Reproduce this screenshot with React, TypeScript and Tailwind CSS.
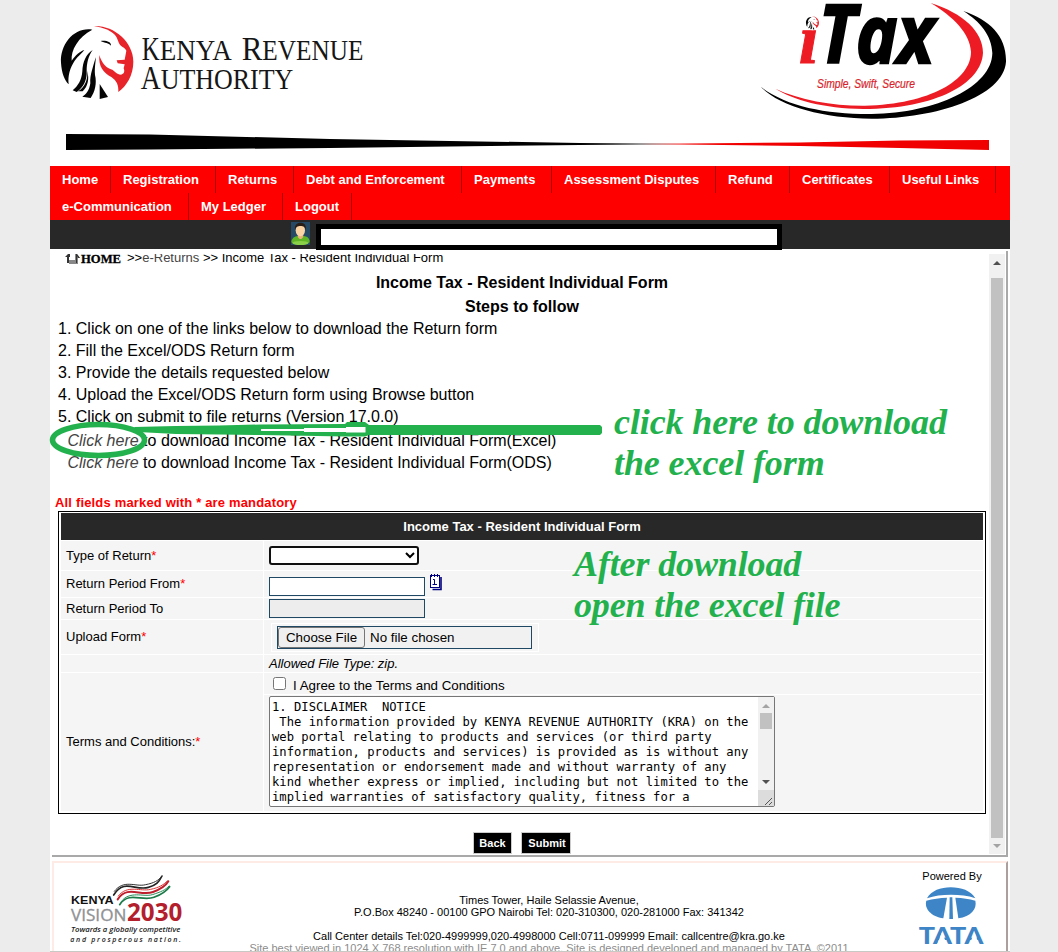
import React from "react";

const SANS = "Liberation Sans, Arial, sans-serif";

function Lion() {
  return (
    <g>
      <g fill="#050505">
        <path d="M127 89C75 80 30 130 33 188C35 220 44 240 56 253C53 226 60 204 74 182C84 168 95 161 103 150C90 154 76 166 65 182C62 150 84 112 127 89Z" />
        <path d="M128 150C108 162 98 186 97 214C95 240 84 258 68 271L80 276C100 262 112 240 110 212C110 190 115 168 128 150Z" />
        <path d="M112 212C114 240 104 262 84 274L98 274C114 258 118 238 112 212Z" />
        <path d="M137 172C130 200 119 225 121 250C118 272 107 284 97 290L122 294C135 275 141 250 135 225C133 200 138 185 137 172Z" />
        <path d="M149 252L174 291L149 297Z" />
        <path d="M152 123C168 121 184 125 183 137C176 128 165 130 152 123Z" />
      </g>
      <path
        fill="#e8242b"
        d="M132 78C190 75 250 125 250 185C250 225 230 258 205 276C206 255 200 243 185 232C160 218 145 200 148 165C155 190 170 205 187 209C195 215 200 222 213 224C222 222 225 215 221 205L224 193L203 190L200 181L224 179L229 152C222 140 213 142 207 130C201 112 197 105 185 97C170 85 150 82 132 78Z"
      />
    </g>
  );
}

function KraLogo() {
  return (
    <svg width="330" height="130" viewBox="0 0 990 390">
      <Lion />
      <g fill="#161616" fontFamily="Liberation Serif, Times New Roman, serif">
        <text x="275" y="181" fontSize="102" textLength="54" lengthAdjust="spacingAndGlyphs">K</text>
        <text x="329" y="181" fontSize="88" textLength="216" lengthAdjust="spacingAndGlyphs">ENYA</text>
        <text x="575" y="181" fontSize="102" textLength="62" lengthAdjust="spacingAndGlyphs">R</text>
        <text x="637" y="181" fontSize="88" textLength="303" lengthAdjust="spacingAndGlyphs">EVENUE</text>
        <text x="272" y="267" fontSize="102" textLength="60" lengthAdjust="spacingAndGlyphs">A</text>
        <text x="332" y="267" fontSize="88" textLength="398" lengthAdjust="spacingAndGlyphs">UTHORITY</text>
      </g>
    </svg>
  );
}

function ITaxLogo() {
  return (
    <svg width="260" height="130" viewBox="0 0 780 390">
      <path fill="#ed1c24" d="M542 9C640 40 699 95 699 158C695 250 560 326 340 327C220 325 130 300 76 266C150 300 250 318 345 317C540 312 663 240 663 155C660 100 610 50 542 9Z" />
      <path fill="#000" d="M640 33C720 60 770 110 768 185C760 290 560 355 365 356C220 355 90 320 33 261C110 320 230 343 365 342C560 340 725 260 727 160C725 105 690 65 640 33Z" />
      <text x="146" y="189" fontSize="212" fill="#ed1c24" stroke="#ed1c24" strokeWidth="3" fontFamily="Liberation Serif, serif" fontWeight="bold" fontStyle="italic">i</text>
      <circle cx="188" cy="64" r="27" fill="#fff" />
      <g transform="translate(162 35) scale(.18)">
        <Lion />
      </g>
      <text x="207" y="190" fontSize="242" fill="#000" stroke="#000" strokeWidth="7" fontFamily="Open Sans, Noto Sans, sans-serif" fontWeight="bold" fontStyle="italic" textLength="346" lengthAdjust="spacingAndGlyphs">Tax</text>
      <text x="201" y="264" fontSize="37" fill="#d8232a" stroke="#d8232a" strokeWidth=".6" fontFamily={SANS} fontStyle="italic" textLength="294" lengthAdjust="spacingAndGlyphs">Simple, Swift, Secure</text>
    </svg>
  );
}

function NavItem({ label, w }: { label: string; w: string }) {
  return <div className={`${w} h-[27px] shrink-0 border-r border-[#a80000] pl-3 text-[13px] leading-[27px] font-bold text-white whitespace-nowrap`}>{label}</div>;
}

const row1 = [
  ["Home", "w-[61px]"],
  ["Registration", "w-[105px]"],
  ["Returns", "w-[78px]"],
  ["Debt and Enforcement", "w-[168px]"],
  ["Payments", "w-[90px]"],
  ["Assessment Disputes", "w-[164px]"],
  ["Refund", "w-[74px]"],
  ["Certificates", "w-[100px]"],
  ["Useful Links", "w-[106px]"],
];
const row2 = [
  ["e-Communication", "w-[139px]"],
  ["My Ledger", "w-[94px]"],
  ["Logout", "w-[69px]"],
];

function Avatar() {
  return (
    <svg width="19" height="23" viewBox="0 0 57 69" className="ml-[241px] mt-[2px] shrink-0">
      <rect width="57" height="69" fill="#264a66" />
      <path d="M1 60C2 48 12 43 20 42L38 42C48 43 56 48 56 60C50 71 8 71 1 60Z" fill="#5fb526" />
      <ellipse cx="28" cy="63" rx="24" ry="6" fill="#8ad048" />
      <path d="M20 38L37 38L36 46C32 53 25 53 21 46Z" fill="#edb27c" />
      <ellipse cx="28" cy="25" rx="14" ry="18" fill="#fbd3a5" />
      <path d="M12 24C10 8 18 2 28 2C40 2 47 9 44 25C42 14 38 12 28 12C20 12 15 14 12 24Z" fill="#2a1d16" />
    </svg>
  );
}

function Tri({ up, color }: { up?: boolean; color: string }) {
  return (
    <svg width="8" height="4" viewBox="0 0 8 4">
      <path d={up ? "M0 4L4 0L8 4Z" : "M0 0L8 0L4 4Z"} fill={color} />
    </svg>
  );
}

function Star() {
  return <span className="text-[#ff0000]">*</span>;
}

function Row({ h, label, children }: { h: string; label?: React.ReactNode; children?: React.ReactNode }) {
  return (
    <div className={`flex gap-px ${h}`}>
      <div className="w-[202px] shrink-0 bg-[#f5f5f5] pl-[5px] flex items-center">{label}</div>
      <div className="flex-1 bg-[#f5f5f5] pl-[5px] flex items-center">{children}</div>
    </div>
  );
}

const terms = `1. DISCLAIMER  NOTICE
 The information provided by KENYA REVENUE AUTHORITY (KRA) on the
web portal relating to products and services (or third party
information, products and services) is provided as is without any
representation or endorsement made and without warranty of any
kind whether express or implied, including but not limited to the
implied warranties of satisfactory quality, fitness for a`;

function Terms() {
  return (
    <div className="flex h-[111px] w-[506px] rounded-[2px] border border-[#767676] bg-white">
      <pre className="flex-1 overflow-hidden pl-[2px] pt-[3px] text-[12.18px] leading-[15px] text-black [font-family:'DejaVu_Sans_Mono',monospace]">{terms}</pre>
      <div className="flex w-4 flex-col items-center bg-[#f1f1f1]">
        <div className="flex h-4 items-center pt-[2px]"><Tri up color="#a3a3a3" /></div>
        <div className="h-4 w-3 bg-[#c1c1c1]" />
        <div className="mt-auto flex h-[17px] items-center"><Tri color="#505050" /></div>
        <div className="flex h-4 w-4 items-end justify-end bg-[#dcdcdc] p-px">
          <svg width="8" height="8" viewBox="0 0 8 8" stroke="#555" strokeWidth="1">
            <path d="M0 8L7 1M4 8L7 5" />
          </svg>
        </div>
      </div>
    </div>
  );
}

function FormTable() {
  return (
    <div className="ml-[3px] mt-px flex h-[303px] w-[928px] flex-col gap-px border border-black px-[2px] pt-px text-[13px] leading-[15px]">
      <div className="h-[27px] shrink-0 bg-[#282828] text-center leading-[27px] font-bold text-white">Income Tax - Resident Individual Form</div>
      <Row h="h-[29px]" label={<span>Type of Return<Star /></span>}>
        <div className="flex h-[19px] w-[150px] items-center justify-end rounded-[3px] border-2 border-[#101010] bg-white pr-[2px]">
          <svg width="10" height="7" viewBox="0 0 10 7" fill="none" stroke="#000" strokeWidth="2"><path d="M1 1L5 5L9 1" /></svg>
        </div>
      </Row>
      <Row h="h-[26px]" label={<span className="-mt-[2px]">Return Period From<Star /></span>}>
        <div className="mt-[5px] h-[19px] w-[156px] border border-[#1f4864] bg-white" />
        <svg width="13" height="18" viewBox="0 0 13 18" className="-mt-[4px] ml-1">
          <path d="M3.500 16.500H12V4" fill="none" stroke="#000080" strokeWidth="1.600" />
          <rect x="1.500" y="2.500" width="9" height="12" fill="#fff" stroke="#000080" />
          <path d="M2.500 1V4M5.500 1V4M8.500 1V4" stroke="#000080" />
          <path d="M4 6.500H5.500V11.500M3.500 11.500H8" fill="none" stroke="#000080" />
        </svg>
      </Row>
      <Row h="h-[21px]" label={<span>Return Period To</span>}>
        <div className="h-[19px] w-[156px] border border-[#1f4864] bg-[#ededed]" />
      </Row>
      <Row h="h-[34px]" label={<span className="-mt-[2px]">Upload Form<Star /></span>}>
        <div className="ml-[2px] border border-white py-[2px] pr-[6px] pl-[5px]">
          <div className="flex h-[23px] w-[255px] items-center border border-[#1f4864] bg-[#f1f1f1]">
            <div className="h-[21px] w-[87px] rounded-[3px] border border-[#767676] bg-[#efefef] text-center text-[13.33px] leading-[19px] whitespace-nowrap">Choose File</div>
            <span className="ml-[5px] text-[13.33px]">No file chosen</span>
          </div>
        </div>
      </Row>
      <Row h="h-[17px]"><span className="italic">Allowed File Type: zip.</span></Row>
      <div className="flex h-[138px] gap-px">
        <div className="flex w-[202px] shrink-0 items-center bg-[#f5f5f5] pb-[2px] pl-[5px]"><span>Terms and Conditions:<Star /></span></div>
        <div className="flex flex-1 flex-col gap-px">
          <div className="flex h-[21px] items-center bg-[#f5f5f5] pl-[9px]">
            <span className="h-[13px] w-[13px] rounded-[2.5px] border border-[#767676] bg-white" />
            <span className="mt-[3px] ml-[7px] text-[13.33px]">I Agree to the Terms and Conditions</span>
          </div>
          <div className="flex-1 bg-[#f5f5f5] pl-[5px] pt-px"><Terms /></div>
        </div>
      </div>
    </div>
  );
}

function HomeMark() {
  return (
    <svg width="57" height="15" viewBox="0 0 57 15" className="shrink-0">
      <path d="M0 7L3 4H5V7H4V13H2V7Z" fill="#333" />
      <path d="M4 10H10V4H12L15 8H13V14H4Z" fill="#888" />
      <path d="M10 4H12L15 8H13L12 6V13H11V4Z" fill="#333" />
      <text x="16" y="13" fontFamily="Liberation Serif, serif" fontWeight="bold" fontSize="12" textLength="40" lengthAdjust="spacingAndGlyphs" stroke="#000" strokeWidth=".3">HOME</text>
    </svg>
  );
}

function Vision2030() {
  return (
    <svg width="120" height="74" viewBox="0 0 360 222" className="mt-[11px] ml-[15px]">
      <g fill="none" strokeLinecap="round">
        <path d="M134 63C165 12 200 52 238 40C262 34 270 24 279 6" stroke="#222" strokeWidth="5" />
        <path d="M136 52C165 14 200 40 230 32C255 27 268 20 277 8" stroke="#333" strokeWidth="3" />
        <path d="M146 76C175 32 215 68 252 54C280 44 290 36 298 22" stroke="#bd1f2d" strokeWidth="6" />
        <path d="M148 66C175 30 215 54 245 46C270 41 285 32 296 20" stroke="#d33" strokeWidth="3" />
        <path d="M152 92C180 50 220 84 255 70C280 60 292 52 302 38" stroke="#1b7a48" strokeWidth="5" />
        <path d="M156 84C180 48 225 70 250 62C275 54 290 48 300 36" stroke="#2b8a58" strokeWidth="3" />
      </g>
      <text x="6" y="90" fontSize="32" fontWeight="bold" fill="#111" fontFamily={SANS} textLength="128" lengthAdjust="spacingAndGlyphs">KENYA</text>
      <text x="6" y="140" fontSize="50" fill="#909295" stroke="#909295" fontFamily="Open Sans, sans-serif" textLength="166" lengthAdjust="spacingAndGlyphs">VISION</text>
      <text x="174" y="140" fontSize="73" fontWeight="bold" fill="#b3202c" fontFamily="Open Sans, sans-serif" textLength="166" lengthAdjust="spacingAndGlyphs">2030</text>
      <text x="6" y="175" fontSize="21" fontStyle="italic" fontWeight="600" fill="#1a1a1a" fontFamily="Open Sans, sans-serif" textLength="328" lengthAdjust="spacingAndGlyphs">Towards a globally competitive</text>
      <text x="4" y="205" fontSize="21" fontStyle="italic" fontWeight="600" fill="#1a1a1a" fontFamily="Open Sans, sans-serif" textLength="332">and prosperous nation.</text>
    </svg>
  );
}

function TataLogo() {
  return (
    <svg width="66" height="60" viewBox="0 0 198 180">
      <g fill="#3d85c6">
        <path d="M27 37C40 14 68 4 98 4C130 4 158 14 172 37C150 28 125 26 99 26C72 26 48 29 27 37Z" />
        <path d="M25 44C45 38 65 36 87 35L76 97C40 92 18 68 25 44Z" />
        <path d="M172 44C153 38 134 36 112 35L121 97C158 92 178 68 172 44Z" />
        <path d="M95 34H103L105 99H94Z" />
      </g>
      <text x="2" y="173" fontSize="67" fontWeight="900" fill="#3d85c6" fontFamily="Lato, sans-serif" textLength="194" lengthAdjust="spacingAndGlyphs">TATA</text>
      <path d="M72 139L86 174H58ZM169 139L183 174H155Z" fill="#fff" />
    </svg>
  );
}

export default function App() {
  return (
    <div className="relative flex h-[952px] w-[1058px] overflow-hidden bg-[#ececec] pl-[50px] text-black [font-family:'Liberation_Sans',Arial,sans-serif]">
      <div className="flex w-[960px] flex-col bg-white">
        <header className="h-[166px] shrink-0">
          <div className="flex justify-between">
            <KraLogo />
            <ITaxLogo />
          </div>
          <svg width="960" height="36" viewBox="0 0 960 36" className="block">
            <path d="M16 4L100 4.500L280 9L530 13L630 14L530 15L280 18L100 19.500L16 20Z" fill="#000" />
            <path d="M590 14L750 12.500L850 10.500L939 10V20L850 18L750 16Z" fill="#f00000" />
          </svg>
        </header>
        <nav className="h-[54px] shrink-0 bg-[#ff0000]">
          <div className="flex">{row1.map(([l, w]) => <NavItem key={l} label={l} w={w} />)}</div>
          <div className="flex">{row2.map(([l, w]) => <NavItem key={l} label={l} w={w} />)}</div>
        </nav>
        <div className="relative z-10 flex h-[29px] shrink-0 items-start bg-[#282828]">
          <Avatar />
          <div className="ml-[6px] mt-[4px] h-[26px] w-[466px] shrink-0 border-[5px] border-black bg-white" />
        </div>

        <main className="mx-[2px] mt-[2px] flex h-[606px] shrink-0 border-r-2 border-b-2 border-[#a9a9a9] pt-[3px] pr-px">
          <div className="flex-1 overflow-hidden pl-[3px]">
            <div className="-mt-[4px] flex h-[15px] items-center pl-[10px] text-[13px] leading-[15px]">
              <HomeMark />
              <span className="ml-[5px] whitespace-pre">&gt;&gt;<span className="text-[#444]">e-Returns</span> &gt;&gt; Income Tax - Resident Individual Form</span>
            </div>
            <div className="mt-[6px] text-center text-base leading-6 font-bold">
              <div>Income Tax - Resident Individual Form</div>
              <div>Steps to follow</div>
            </div>
            <div className="-mt-px pl-[3px] text-base leading-[22px]">
              <div>1. Click on one of the links below to download the Return form</div>
              <div>2. Fill the Excel/ODS Return form</div>
              <div>3. Provide the details requested below</div>
              <div>4. Upload the Excel/ODS Return form using Browse button</div>
              <div>5. Click on submit to file returns (Version 17.0.0)</div>
              <div className="mt-[2px] pl-[9.5px]"><i className="text-[#444]">Click here</i> to download Income Tax - Resident Individual Form(Excel)</div>
              <div className="pl-[9.5px]"><i className="text-[#444]">Click here</i> to download Income Tax - Resident Individual Form(ODS)</div>
            </div>
            <div className="mt-[22px] h-[14px] text-[13px] leading-[14px] font-bold tracking-[0.17px] text-[#ff0000]">All fields marked with * are mandatory</div>
            <FormTable />
            <div className="mt-[18px] flex justify-center gap-[9px] text-[11px] leading-[20px] font-bold text-white">
              <div className="w-[39px] border border-[#ccc] bg-black text-center">Back</div>
              <div className="w-[50px] border border-[#ccc] bg-black pl-[2px] text-center">Submit</div>
            </div>
          </div>
          <div className="flex h-[600px] w-4 flex-col items-center bg-[#f1f1f1]">
            <div className="flex h-6 items-center pb-[6px]"><Tri up color="#505050" /></div>
            <div className="h-[560px] w-3 bg-[#c1c1c1]" />
            <div className="flex h-4 items-center"><Tri color="#a3a3a3" /></div>
          </div>
        </main>

        <footer className="mx-[2px] mt-[4px] flex h-[90px] shrink-0 overflow-hidden border-t-2 border-r-2 border-l-2 border-t-[#ffebe6] border-r-[#aca09e] border-l-[#ffebe6]">
          <div className="w-[135px] shrink-0"><Vision2030 /></div>
          <div className="w-[720px] shrink-0 pt-[31px] text-center text-[11px] leading-[12px]">
            <div>Times Tower, Haile Selassie Avenue,</div>
            <div>P.O.Box 48240 - 00100 GPO Nairobi Tel: 020-310300, 020-281000 Fax: 341342</div>
            <div className="mt-3">Call Center details Tel:020-4999999,020-4998000 Cell:0711-099999 Email: callcentre@kra.go.ke</div>
            <div className="text-[#8c8c8c]">Site best viewed in 1024 X 768 resolution with IE 7.0 and above. Site is designed developed and managed by TATA &nbsp;©2011</div>
          </div>
          <div className="flex w-[86px] flex-col items-center pt-[7px] text-[11px] leading-[13px]">
            <div>Powered By</div>
            <div className="mt-[3px] mr-[3px]"><TataLogo /></div>
          </div>
        </footer>
        <div className="h-px w-full bg-[#c8c8c4]" />
      </div>

      <svg className="absolute top-[415px] left-[45px]" width="570" height="50" viewBox="45 415 570 50">
        <ellipse cx="98.500" cy="440" rx="46" ry="15.500" fill="none" stroke="#22b14c" strokeWidth="5.500" />
        <path fill="#22b14c" d="M134 427L176 426L219 425.500L261 424.500L345 424L347 422L365 422L369 425H600L602 427V433L600 435H369L365 436.500H345L261 435L219 434.500L176 434L138 432Z" />
        <path fill="#fff" d="M261 429H304V428H346V427H365.500V432.500H346V432H304V431H261Z" />
      </svg>
      <div className="absolute top-[402px] left-[614px] text-[36px] leading-[41px] font-bold tracking-[-0.1px] whitespace-nowrap text-[#22b14c] italic [font-family:'Liberation_Serif',serif]">
        <div>click here to download</div>
        <div>the excel form</div>
      </div>
      <div className="absolute top-[544px] left-[574px] text-[36px] leading-[41px] font-bold tracking-[-0.13px] whitespace-nowrap text-[#22b14c] italic [font-family:'Liberation_Serif',serif]">
        <div>After download</div>
        <div>open the excel file</div>
      </div>
    </div>
  );
}
